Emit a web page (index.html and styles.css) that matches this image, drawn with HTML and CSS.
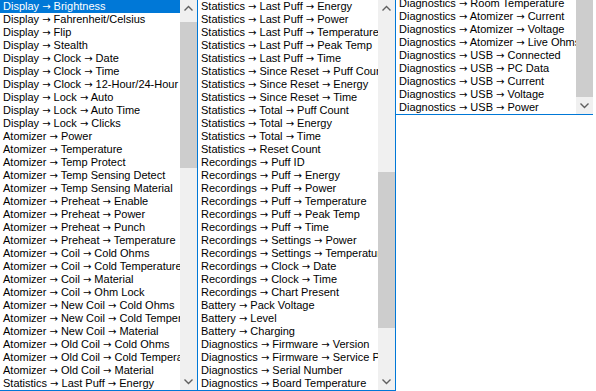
FILE: index.html
```html
<!DOCTYPE html>
<html lang="en">
<head>
  <meta charset="UTF-8" />
  <title>Setting Lists</title>
  <link rel="stylesheet" href="styles.css">
</head>
<body>
  <div class="panes">

    <!-- left list -->
    <div class="listbox tall">
      <ul class="items">
        <li class="selected">Display <i>→</i> Brightness</li>
        <li>Display <i>→</i> Fahrenheit/Celsius</li>
        <li>Display <i>→</i> Flip</li>
        <li>Display <i>→</i> Stealth</li>
        <li>Display <i>→</i> Clock <i>→</i> Date</li>
        <li>Display <i>→</i> Clock <i>→</i> Time</li>
        <li>Display <i>→</i> Clock <i>→</i> 12-Hour/24-Hour</li>
        <li>Display <i>→</i> Lock <i>→</i> Auto</li>
        <li>Display <i>→</i> Lock <i>→</i> Auto Time</li>
        <li>Display <i>→</i> Lock <i>→</i> Clicks</li>
        <li>Atomizer <i>→</i> Power</li>
        <li>Atomizer <i>→</i> Temperature</li>
        <li>Atomizer <i>→</i> Temp Protect</li>
        <li>Atomizer <i>→</i> Temp Sensing Detect</li>
        <li>Atomizer <i>→</i> Temp Sensing Material</li>
        <li>Atomizer <i>→</i> Preheat <i>→</i> Enable</li>
        <li>Atomizer <i>→</i> Preheat <i>→</i> Power</li>
        <li>Atomizer <i>→</i> Preheat <i>→</i> Punch</li>
        <li>Atomizer <i>→</i> Preheat <i>→</i> Temperature</li>
        <li>Atomizer <i>→</i> Coil <i>→</i> Cold Ohms</li>
        <li>Atomizer <i>→</i> Coil <i>→</i> Cold Temperature</li>
        <li>Atomizer <i>→</i> Coil <i>→</i> Material</li>
        <li>Atomizer <i>→</i> Coil <i>→</i> Ohm Lock</li>
        <li>Atomizer <i>→</i> New Coil <i>→</i> Cold Ohms</li>
        <li>Atomizer <i>→</i> New Coil <i>→</i> Cold Temperature</li>
        <li>Atomizer <i>→</i> New Coil <i>→</i> Material</li>
        <li>Atomizer <i>→</i> Old Coil <i>→</i> Cold Ohms</li>
        <li>Atomizer <i>→</i> Old Coil <i>→</i> Cold Temperature</li>
        <li>Atomizer <i>→</i> Old Coil <i>→</i> Material</li>
        <li>Statistics <i>→</i> Last Puff <i>→</i> Energy</li>
      </ul>
      <div class="scrollbar">
        <div class="arrow"><svg width="17" height="17"><polyline points="4.5,10.5 8.5,6.5 12.5,10.5" /></svg></div>
        <div class="track"><div class="thumb" style="margin-top:5px;height:146px"></div></div>
        <div class="arrow"><svg width="17" height="17"><polyline points="4.5,6.5 8.5,10.5 12.5,6.5" /></svg></div>
      </div>
    </div>

    <!-- middle list -->
    <div class="listbox tall">
      <ul class="items">
        <li>Statistics <i>→</i> Last Puff <i>→</i> Energy</li>
        <li>Statistics <i>→</i> Last Puff <i>→</i> Power</li>
        <li>Statistics <i>→</i> Last Puff <i>→</i> Temperature</li>
        <li>Statistics <i>→</i> Last Puff <i>→</i> Peak Temp</li>
        <li>Statistics <i>→</i> Last Puff <i>→</i> Time</li>
        <li>Statistics <i>→</i> Since Reset <i>→</i> Puff Count</li>
        <li>Statistics <i>→</i> Since Reset <i>→</i> Energy</li>
        <li>Statistics <i>→</i> Since Reset <i>→</i> Time</li>
        <li>Statistics <i>→</i> Total <i>→</i> Puff Count</li>
        <li>Statistics <i>→</i> Total <i>→</i> Energy</li>
        <li>Statistics <i>→</i> Total <i>→</i> Time</li>
        <li>Statistics <i>→</i> Reset Count</li>
        <li>Recordings <i>→</i> Puff ID</li>
        <li>Recordings <i>→</i> Puff <i>→</i> Energy</li>
        <li>Recordings <i>→</i> Puff <i>→</i> Power</li>
        <li>Recordings <i>→</i> Puff <i>→</i> Temperature</li>
        <li>Recordings <i>→</i> Puff <i>→</i> Peak Temp</li>
        <li>Recordings <i>→</i> Puff <i>→</i> Time</li>
        <li>Recordings <i>→</i> Settings <i>→</i> Power</li>
        <li>Recordings <i>→</i> Settings <i>→</i> Temperature</li>
        <li>Recordings <i>→</i> Clock <i>→</i> Date</li>
        <li>Recordings <i>→</i> Clock <i>→</i> Time</li>
        <li>Recordings <i>→</i> Chart Present</li>
        <li>Battery <i>→</i> Pack Voltage</li>
        <li>Battery <i>→</i> Level</li>
        <li>Battery <i>→</i> Charging</li>
        <li>Diagnostics <i>→</i> Firmware <i>→</i> Version</li>
        <li>Diagnostics <i>→</i> Firmware <i>→</i> Service Pack</li>
        <li>Diagnostics <i>→</i> Serial Number</li>
        <li>Diagnostics <i>→</i> Board Temperature</li>
      </ul>
      <div class="scrollbar">
        <div class="arrow"><svg width="17" height="17"><polyline points="4.5,10.5 8.5,6.5 12.5,10.5" /></svg></div>
        <div class="track"><div class="thumb" style="margin-top:155px;height:156px"></div></div>
        <div class="arrow"><svg width="17" height="17"><polyline points="4.5,6.5 8.5,10.5 12.5,6.5" /></svg></div>
      </div>
    </div>

    <!-- right list, scrolled to the end -->
    <div class="listbox short">
      <ul class="items bottom">
        <li>Diagnostics <i>→</i> Room Temperature</li>
        <li>Diagnostics <i>→</i> Atomizer <i>→</i> Current</li>
        <li>Diagnostics <i>→</i> Atomizer <i>→</i> Voltage</li>
        <li>Diagnostics <i>→</i> Atomizer <i>→</i> Live Ohms</li>
        <li>Diagnostics <i>→</i> USB <i>→</i> Connected</li>
        <li>Diagnostics <i>→</i> USB <i>→</i> PC Data</li>
        <li>Diagnostics <i>→</i> USB <i>→</i> Current</li>
        <li>Diagnostics <i>→</i> USB <i>→</i> Voltage</li>
        <li>Diagnostics <i>→</i> USB <i>→</i> Power</li>
      </ul>
      <div class="scrollbar">
        <div class="track"><div class="thumb" style="height:97px"></div></div>
        <div class="arrow"><svg width="17" height="17"><polyline points="4.5,6.5 8.5,10.5 12.5,6.5" /></svg></div>
      </div>
    </div>

  </div>
</body>
</html>
```

FILE: styles.css
```css
body {
  margin: 0;
  background: #fff;
  font-family: "Liberation Sans", Arial, sans-serif;
  font-size: 11px;
  color: #000;
  overflow: hidden;
}
.panes {
  display: flex;
  align-items: flex-start;
  margin: -1px 0 0 -1px;
}
.listbox {
  display: flex;
  box-sizing: border-box;
  width: 199px;
  margin-right: -1px;
  border: 1px solid #0078d7;
  background: #fff;
}
.listbox.tall {
  height: 392px;
}
.listbox.short {
  width: 198px;
  height: 116px;
  border-right: none;
}
.items {
  flex: 1;
  min-width: 0;
  margin: 0;
  padding: 0;
  list-style: none;
  overflow: hidden;
}
.items.bottom {
  display: flex;
  flex-direction: column;
  justify-content: flex-end;
}
.items li {
  flex-shrink: 0;
  height: 13px;
  line-height: 13px;
  padding-left: 3px;
  white-space: nowrap;
  overflow: hidden;
}
/* arrow glyph comes from a font with a long shaft */
.items i {
  font-style: normal;
  font-family: "DejaVu Sans", sans-serif;
  font-size: 10px;
}
.items li.selected {
  background: #0078d7;
  color: #fff;
}
.scrollbar {
  display: flex;
  flex-direction: column;
  width: 17px;
  background: #f0f0f0;
}
.track {
  flex: 1;
}
.thumb {
  background: #cdcdcd;
}
.arrow {
  height: 17px;
}
.arrow svg {
  display: block;
}
.arrow polyline {
  fill: none;
  stroke: #606060;
  stroke-width: 1.4;
}
```
